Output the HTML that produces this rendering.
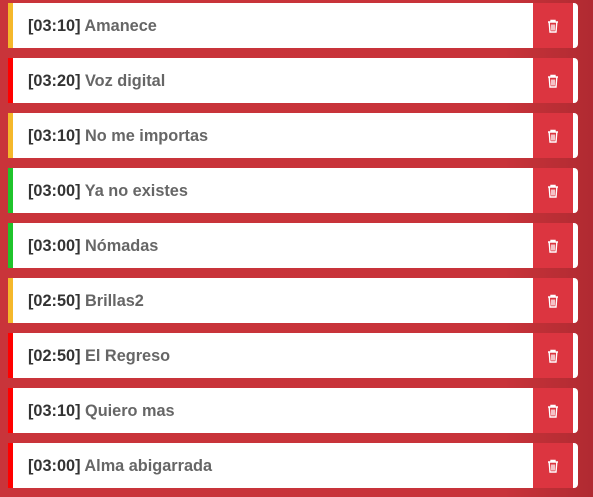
<!DOCTYPE html>
<html><head><style>
html,body{margin:0;padding:0}
body{width:593px;height:497px;overflow:hidden;position:relative;
background:linear-gradient(90deg,#c9343a 0%,#c8333a 85%,#b02a31 100%);
font-family:"Liberation Sans",sans-serif}
.row{position:absolute;left:8px;width:570px;height:45px;background:#fff;border-radius:0 4px 4px 0;box-sizing:border-box;border-left:5px solid #f5b82b}
.t{position:absolute;left:15px;top:1px;line-height:45px;font-size:16.3px;color:#666;font-weight:bold;white-space:nowrap}
.t b{color:#333}
.btn{position:absolute;left:520px;top:0;width:40px;height:45px;background:#dc3540;display:flex;align-items:center;justify-content:center}
.o{border-left-color:#f5b82b}.r{border-left-color:#ff0000}.g{border-left-color:#1fc42b}
</style></head><body>
<div class="row o" style="top:3px"><div class="t"><b>[03:10]</b> Amanece</div><div class="btn"><svg width="12" height="14" viewBox="0 0 12 14"><path d="M1 3h10M4 3V1.5h4V3M2.2 3.5l.8 9.5h6l.8-9.5M5 5.5v6M7 5.5v6" stroke="#fff" stroke-width="1.4" fill="none"/></svg></div></div>
<div class="row r" style="top:58px"><div class="t"><b>[03:20]</b> Voz digital</div><div class="btn"><svg width="12" height="14" viewBox="0 0 12 14"><path d="M1 3h10M4 3V1.5h4V3M2.2 3.5l.8 9.5h6l.8-9.5M5 5.5v6M7 5.5v6" stroke="#fff" stroke-width="1.4" fill="none"/></svg></div></div>
<div class="row o" style="top:113px"><div class="t"><b>[03:10]</b> No me importas</div><div class="btn"><svg width="12" height="14" viewBox="0 0 12 14"><path d="M1 3h10M4 3V1.5h4V3M2.2 3.5l.8 9.5h6l.8-9.5M5 5.5v6M7 5.5v6" stroke="#fff" stroke-width="1.4" fill="none"/></svg></div></div>
<div class="row g" style="top:168px"><div class="t"><b>[03:00]</b> Ya no existes</div><div class="btn"><svg width="12" height="14" viewBox="0 0 12 14"><path d="M1 3h10M4 3V1.5h4V3M2.2 3.5l.8 9.5h6l.8-9.5M5 5.5v6M7 5.5v6" stroke="#fff" stroke-width="1.4" fill="none"/></svg></div></div>
<div class="row g" style="top:223px"><div class="t"><b>[03:00]</b> Nómadas</div><div class="btn"><svg width="12" height="14" viewBox="0 0 12 14"><path d="M1 3h10M4 3V1.5h4V3M2.2 3.5l.8 9.5h6l.8-9.5M5 5.5v6M7 5.5v6" stroke="#fff" stroke-width="1.4" fill="none"/></svg></div></div>
<div class="row o" style="top:278px"><div class="t"><b>[02:50]</b> Brillas2</div><div class="btn"><svg width="12" height="14" viewBox="0 0 12 14"><path d="M1 3h10M4 3V1.5h4V3M2.2 3.5l.8 9.5h6l.8-9.5M5 5.5v6M7 5.5v6" stroke="#fff" stroke-width="1.4" fill="none"/></svg></div></div>
<div class="row r" style="top:333px"><div class="t"><b>[02:50]</b> El Regreso</div><div class="btn"><svg width="12" height="14" viewBox="0 0 12 14"><path d="M1 3h10M4 3V1.5h4V3M2.2 3.5l.8 9.5h6l.8-9.5M5 5.5v6M7 5.5v6" stroke="#fff" stroke-width="1.4" fill="none"/></svg></div></div>
<div class="row r" style="top:388px"><div class="t"><b>[03:10]</b> Quiero mas</div><div class="btn"><svg width="12" height="14" viewBox="0 0 12 14"><path d="M1 3h10M4 3V1.5h4V3M2.2 3.5l.8 9.5h6l.8-9.5M5 5.5v6M7 5.5v6" stroke="#fff" stroke-width="1.4" fill="none"/></svg></div></div>
<div class="row r" style="top:443px"><div class="t"><b>[03:00]</b> Alma abigarrada</div><div class="btn"><svg width="12" height="14" viewBox="0 0 12 14"><path d="M1 3h10M4 3V1.5h4V3M2.2 3.5l.8 9.5h6l.8-9.5M5 5.5v6M7 5.5v6" stroke="#fff" stroke-width="1.4" fill="none"/></svg></div></div>
</body></html>
